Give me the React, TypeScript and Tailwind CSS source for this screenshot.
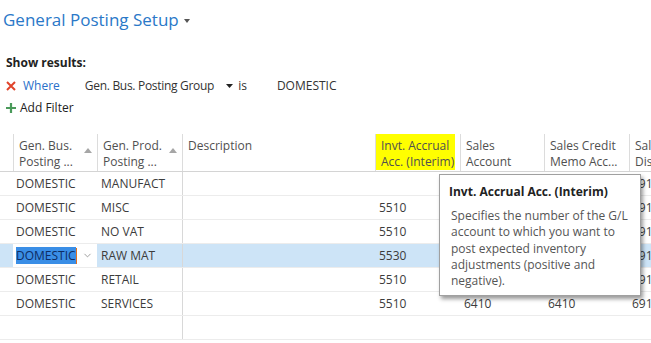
import { ChevronDown } from "lucide-react";

const font = { fontFamily: '"Open Sans", "Noto Sans", sans-serif' };

type Row = {
  bus: string;
  prod: string;
  invt: string;
  sales: string;
  credit: string;
  disc: string;
  selected?: boolean;
};

// sales / credit values of rows 1-5 sit under the tooltip, so they're left out
const rows: Row[] = [
  { bus: "DOMESTIC", prod: "MANUFACT", invt: "", sales: "", credit: "", disc: "6910" },
  { bus: "DOMESTIC", prod: "MISC", invt: "5510", sales: "", credit: "", disc: "6910" },
  { bus: "DOMESTIC", prod: "NO VAT", invt: "5510", sales: "", credit: "", disc: "6910" },
  { bus: "DOMESTIC", prod: "RAW MAT", invt: "5530", sales: "", credit: "", disc: "6910", selected: true },
  { bus: "DOMESTIC", prod: "RETAIL", invt: "5510", sales: "", credit: "", disc: "6910" },
  { bus: "DOMESTIC", prod: "SERVICES", invt: "5510", sales: "6410", credit: "6410", disc: "6910" },
];

function SortArrow() {
  return (
    <svg width="8" height="5" viewBox="0 0 8 5" className="mt-[14px] shrink-0">
      <path d="M0 5 L4 0 L8 5 Z" fill="#a6a6a6" />
    </svg>
  );
}

function HeadCell({ w, lines, sort, hl }: { w: string; lines: string[]; sort?: boolean; hl?: boolean }) {
  return (
    <div className={`${w} shrink-0 flex pt-[2px]`}>
      <div className={`flex-1 border-l border-[#dcdcdc] flex justify-between ${hl ? "" : "pl-[5px] pr-[5px]"}`}>
        <div className={`leading-[16px] pt-[4px] ${hl ? "bg-[#ffff00] pl-[5px] pr-[1px] h-[36px]" : ""}`}>
          {lines.map((l) => (
            <div key={l} className="whitespace-nowrap">{l}</div>
          ))}
        </div>
        {sort && <SortArrow />}
      </div>
    </div>
  );
}

function DataRow({ r }: { r: Row }) {
  const bg = r.selected ? "bg-[#cde4f7]" : "";
  return (
    <div className="flex h-[24px] border-b border-[#ececec] text-[#3c3c3c]">
      <div className={`w-[13px] shrink-0 ${bg}`} />
      <div className="w-[84px] shrink-0 flex items-center pl-[3px] pr-[4px]">
        {r.selected ? (
          <div className="flex items-center justify-between w-full">
            <span className="flex items-center">
              <span className="bg-[#3a8ee6] text-[#0e2c63] leading-[17px]">{r.bus}</span>
              <span className="w-px h-[16px] bg-[#e07020]" />
            </span>
            <ChevronDown size={11} strokeWidth={1.5} className="text-[#777]" />
          </div>
        ) : (
          r.bus
        )}
      </div>
      <div className={`w-[85px] shrink-0 flex items-center pl-[4px] ${bg}`}>{r.prod}</div>
      <div className={`w-[193px] shrink-0 border-l border-[#d8d8d8] ${bg}`} />
      <div className={`w-[85px] shrink-0 flex items-center pl-[4px] ${bg}`}>{r.invt}</div>
      <div className={`w-[84px] shrink-0 flex items-center pl-[4px] ${bg}`}>{r.sales}</div>
      <div className={`w-[85px] shrink-0 flex items-center pl-[4px] ${bg}`}>{r.credit}</div>
      <div className={`w-[85px] shrink-0 flex items-center pl-[3px] ${bg}`}>{r.disc}</div>
    </div>
  );
}

export default function App() {
  return (
    <div className="w-[651px] h-[343px] bg-white overflow-hidden text-[12px] relative" style={font}>
      <div className="flex items-center pl-[3px] pt-[6px] h-[34px]">
        <span className="text-[17px] text-[#2a78c8]">General Posting Setup</span>
        <svg width="6" height="4" viewBox="0 0 6 4" className="ml-[5px] mt-[1px]">
          <path d="M0 0 L6 0 L3 4 Z" fill="#555" />
        </svg>
      </div>

      <div className="pl-[6px] pt-[21px] font-bold text-[#222] leading-[16px]">Show results:</div>

      <div className="flex items-center pl-[6px] mt-[7px] h-[16px] text-[#333]">
        <svg width="10" height="10" viewBox="0 0 10 10">
          <path d="M1 1 L9 9 M9 1 L1 9" stroke="#e0432a" strokeWidth="2" />
        </svg>
        <span className="ml-[7px] text-[#2a6fc9]">Where</span>
        <span className="ml-[25px] tracking-[-0.3px]">Gen. Bus. Posting Group</span>
        <svg width="7" height="4" viewBox="0 0 7 4" className="ml-[12px]">
          <path d="M0 0 L7 0 L3.5 4 Z" fill="#222" />
        </svg>
        <span className="ml-[5px]">is</span>
        <span className="ml-[30px]">DOMESTIC</span>
      </div>

      <div className="flex items-center pl-[6px] mt-[6px] h-[16px] text-[#222]">
        <svg width="10" height="10" viewBox="0 0 10 10">
          <path d="M5 0 V10 M0 5 H10" stroke="#4a9a5a" strokeWidth="2.2" />
        </svg>
        <span className="ml-[4px]">Add Filter</span>
      </div>

      <div className="mt-[16px] text-[#505050]">
        <div className="flex h-[40px] border-b border-[#d4d4d4]">
          <div className="w-[13px] shrink-0" />
          <HeadCell w="w-[84px]" lines={["Gen. Bus.", "Posting ..."]} sort />
          <HeadCell w="w-[85px]" lines={["Gen. Prod.", "Posting ..."]} sort />
          <HeadCell w="w-[193px]" lines={["Description"]} />
          <HeadCell w="w-[85px]" lines={["Invt. Accrual", "Acc. (Interim)"]} hl />
          <HeadCell w="w-[84px]" lines={["Sales", "Account"]} />
          <HeadCell w="w-[85px]" lines={["Sales Credit", "Memo Acc..."]} />
          <HeadCell w="w-[85px]" lines={["Sales Line", "Disc. Acc."]} />
        </div>
        {rows.map((r) => (
          <DataRow key={r.prod} r={r} />
        ))}
        <div className="flex h-[24px] border-b border-[#ececec]">
          <div className="w-[182px] shrink-0" />
          <div className="w-[193px] shrink-0 border-l border-[#d8d8d8]" />
        </div>
      </div>

      <div className="absolute left-[439px] top-[174px] w-[202px] h-[122px] bg-white border border-[#a0a0a0] shadow-[2px_3px_4px_rgba(0,0,0,0.4)] px-[9px] pt-[8px]">
        <div className="font-bold text-[#222] leading-[18px]">Invt. Accrual Acc. (Interim)</div>
        <div className="mt-[7px] text-[#555] leading-[16.3px] pl-[2px]">
          Specifies the number of the G/L account to which you want to post expected inventory adjustments (positive and negative).
        </div>
      </div>
    </div>
  );
}
